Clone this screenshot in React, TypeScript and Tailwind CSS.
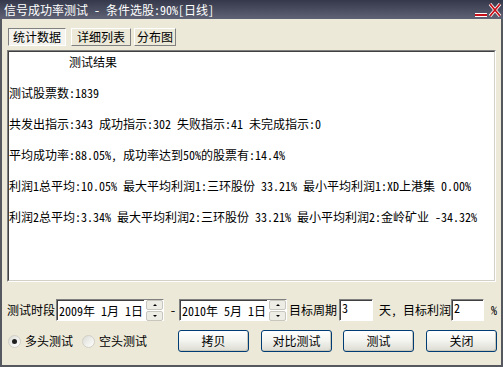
import React from 'react';

const font = "font-['Noto_Sans_Mono_CJK_SC','Noto_Sans_CJK_SC',sans-serif] text-[12px]";

function Tab({ label, active, className }: { label: string; active?: boolean; className?: string }) {
  return (
    <div
      className={
        'flex h-[18px] items-center justify-center border ' +
        (active
          ? 'border-t-[#808080] border-l-[#808080] border-b-white border-r-white bg-[#f4f3ee]'
          : 'border-t-white border-l-white border-b-[#808080] border-r-[#808080] bg-[#ece9d8]') +
        ' ' +
        className
      }
    >
      {label}
    </div>
  );
}

function Spinner() {
  return (
    <div className="ml-[2px] flex h-[21px] w-[17px] flex-col gap-[1px]">
      <div className="flex flex-1 items-center justify-center rounded-[2px] border border-[#c8c6bd] bg-[#eeede5]">
        <div className="h-0 w-0 border-x-[2px] border-b-[2px] border-x-transparent border-b-black" />
      </div>
      <div className="flex flex-1 items-center justify-center rounded-[2px] border border-[#c8c6bd] bg-[#eeede5]">
        <div className="h-0 w-0 border-x-[2px] border-t-[2px] border-x-transparent border-t-black" />
      </div>
    </div>
  );
}

function DateBox({ value }: { value: string }) {
  return (
    <div className="flex h-[22px] w-[108px] items-center border border-t-[#808080] border-l-[#808080] border-b-white border-r-white bg-white">
      <div className="flex h-full flex-1 items-center border-t border-l border-t-[#404040] border-l-[#404040] pl-[1px] whitespace-pre">
        {value}
      </div>
      <Spinner />
    </div>
  );
}

function NumBox({ value, className }: { value: string; className?: string }) {
  return (
    <div
      className={
        'flex h-[22px] border border-t-[#808080] border-l-[#808080] border-b-white border-r-white bg-white ' +
        className
      }
    >
      <div className="flex-1 border-t border-l border-t-[#404040] border-l-[#404040] pl-[1px] leading-[14px]">
        {value}
      </div>
    </div>
  );
}

function XpButton({ label, className }: { label: string; className?: string }) {
  return (
    <div
      className={
        'flex h-[22px] w-[71px] items-center justify-center rounded-[3px] border border-[#003c74] bg-gradient-to-b from-white via-[#f3f3ef] to-[#dcdcd3] shadow-[inset_-1px_-1px_0_#c9c7ba] ' +
        className
      }
    >
      {label}
    </div>
  );
}

function Radio({ checked, label }: { checked?: boolean; label: string }) {
  return (
    <div className="flex items-center gap-[4px]">
      <div className="flex h-[13px] w-[13px] items-center justify-center rounded-full border border-[#d2d0c6] bg-gradient-to-br from-[#dcdcd6] to-white">
        {checked && <div className="h-[5px] w-[5px] rounded-full bg-[#1f1f1f]" />}
      </div>
      <span>{label}</span>
    </div>
  );
}

export default function App() {
  return (
    <div className={'flex h-[367px] w-[503px] flex-col bg-[#ece9d8] text-black ' + font}>
      <div className="flex h-[19px] items-center justify-between bg-gradient-to-b from-[#34384a] to-[#5f6375] pl-[4px] pr-[1px]">
        <span className="whitespace-pre text-white">信号成功率测试 - 条件选股:90%[日线]</span>
        <div className="flex items-center">
          <svg width="14" height="16" viewBox="0 0 14 16">
            <rect x="1" y="11" width="12" height="4" fill="#fff" />
            <rect x="1" y="12" width="12" height="2" fill="#c8101a" />
          </svg>
          <svg width="14" height="16" viewBox="0 0 14 16">
            <path d="M2 2 L12 14 M12 2 L2 14" stroke="#fff" strokeWidth="3.4" />
            <path d="M2 2 L12 14 M12 2 L2 14" stroke="#c8101a" strokeWidth="1.8" />
          </svg>
        </div>
      </div>
      <div className="flex flex-1 flex-col border-x-2 border-b-2 border-x-[#55585f] border-b-[#55585f]">
        <div className="mt-[9px] flex">
          <Tab label="统计数据" active className="ml-[6px] w-[58px]" />
          <Tab label="详细列表" className="ml-[5px] w-[60px]" />
          <Tab label="分布图" className="ml-[3px] w-[42px]" />
        </div>
        <div className="mx-[5px] mt-[4px] h-[232px] border border-t-[#808080] border-l-[#808080] border-b-white border-r-white">
          <div className="flex h-full flex-col gap-[11px] border border-t-[#404040] border-l-[#404040] border-b-[#d4d0c8] border-r-[#d4d0c8] bg-white leading-[20px] whitespace-pre">
            <div className="pl-[60px]">测试结果</div>
            <div>测试股票数:1839</div>
            <div>共发出指示:343 成功指示:302 失败指示:41 未完成指示:0</div>
            <div>平均成功率:88.05%, 成功率达到50%的股票有:14.4%</div>
            <div>利润1总平均:10.05% 最大平均利润1:三环股份 33.21% 最小平均利润1:XD上港集 0.00%</div>
            <div>利润2总平均:3.34% 最大平均利润2:三环股份 33.21% 最小平均利润2:金岭矿业 -34.32%</div>
          </div>
        </div>
        <div className="mt-[17px] flex h-[22px] items-center">
          <span className="ml-[5px] w-[49px]">测试时段</span>
          <DateBox value="2009年 1月 1日" />
          <span className="ml-[6px] w-[9px]">-</span>
          <DateBox value="2010年 5月 1日" />
          <span className="ml-[2px] w-[50px]">目标周期</span>
          <NumBox value="3" className="w-[34px]" />
          <span className="ml-[6px] w-[72px] whitespace-pre">天, 目标利润</span>
          <NumBox value="2" className="w-[33px]" />
          <span className="ml-[7px]">%</span>
        </div>
        <div className="mt-[9px] flex h-[22px] items-center">
          <div className="ml-[6px] flex w-[170px] items-center gap-[9px]">
            <Radio checked label="多头测试" />
            <Radio label="空头测试" />
          </div>
          <XpButton label="拷贝" />
          <XpButton label="对比测试" className="ml-[12px]" />
          <XpButton label="测试" className="ml-[11px]" />
          <XpButton label="关闭" className="ml-[12px]" />
        </div>
      </div>
    </div>
  );
}
